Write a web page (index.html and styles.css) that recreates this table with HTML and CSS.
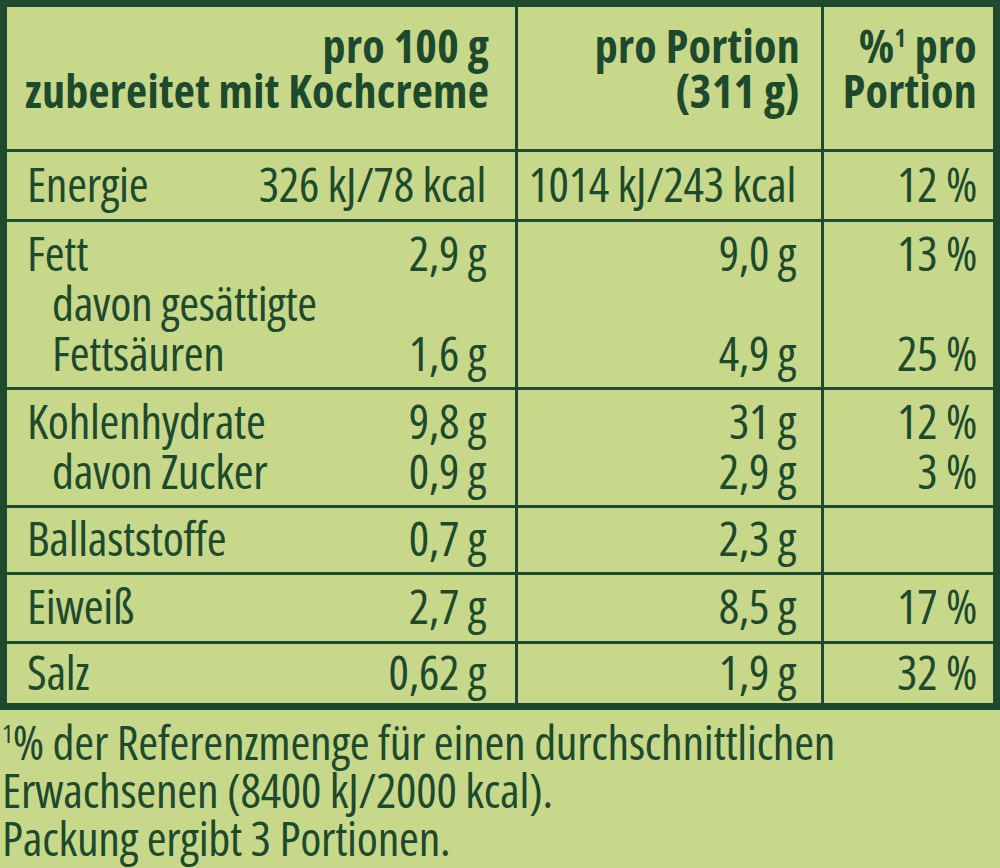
FILE: index.html
```html
<!DOCTYPE html>
<html lang="de">
<head>
<meta charset="utf-8">
<title>Nährwerte</title>
<link rel="stylesheet" href="styles.css">
</head>
<body>
<div class="table">
  <div class="cell head"><div>pro 100 g</div><div>zubereitet mit Kochcreme</div></div>
  <div class="cell head head-2"><div>pro Portion</div><div>(311 g)</div></div>
  <div class="cell head head-3"><div>%<sup>1</sup> pro</div><div>Portion</div></div>

  <div class="cell c1"><div class="line"><span>Energie</span><span>326 kJ/78 kcal</span></div></div>
  <div class="cell c2"><div class="line">1014 kJ/243 kcal</div></div>
  <div class="cell c3"><div class="line">12 %</div></div>

  <div class="cell c1">
    <div class="line"><span>Fett</span><span>2,9 g</span></div>
    <div class="line sub"><span>davon gesättigte</span><span></span></div>
    <div class="line sub"><span>Fettsäuren</span><span>1,6 g</span></div>
  </div>
  <div class="cell c2"><div class="line">9,0 g</div><div class="line"></div><div class="line">4,9 g</div></div>
  <div class="cell c3"><div class="line">13 %</div><div class="line"></div><div class="line">25 %</div></div>

  <div class="cell c1">
    <div class="line"><span>Kohlenhydrate</span><span>9,8 g</span></div>
    <div class="line sub"><span>davon Zucker</span><span>0,9 g</span></div>
  </div>
  <div class="cell c2"><div class="line">31 g</div><div class="line">2,9 g</div></div>
  <div class="cell c3"><div class="line">12 %</div><div class="line">3 %</div></div>

  <div class="cell c1"><div class="line"><span>Ballaststoffe</span><span>0,7 g</span></div></div>
  <div class="cell c2"><div class="line">2,3 g</div></div>
  <div class="cell c3"><div class="line"></div></div>

  <div class="cell c1"><div class="line"><span>Eiweiß</span><span>2,7 g</span></div></div>
  <div class="cell c2"><div class="line">8,5 g</div></div>
  <div class="cell c3"><div class="line">17 %</div></div>

  <div class="cell c1"><div class="line"><span>Salz</span><span>0,62 g</span></div></div>
  <div class="cell c2"><div class="line">1,9 g</div></div>
  <div class="cell c3"><div class="line">32 %</div></div>
</div>
<p class="note"><sup>1</sup>% der Referenzmenge für einen durchschnittlichen<br>Erwachsenen (8400 kJ/2000 kcal).<br>Packung ergibt 3 Portionen.</p>
</body>
</html>
```
FILE: styles.css
```css
html, body {
  margin: 0;
  padding: 0;
  background: #c8d88a;
}
body {
  width: 1000px;
  height: 868px;
  overflow: hidden;
  color: #1d4a2d;
  font-family: "Open Sans", "Liberation Sans", sans-serif;
  font-stretch: 75%;
  font-size: 48px;
  font-weight: 500;
  letter-spacing: -0.3px;
}
.table {
  display: grid;
  grid-template-columns: 508px 303px 169px;
  grid-template-rows: 142px 67px 165px 115px 64px 66px 59px;
  gap: 3px;
  background: #204a30;
  border: 7px solid #204a30;
}
.cell {
  background: #c8d88a;
  display: flex;
  flex-direction: column;
  justify-content: center;
  padding-bottom: 4px;
  line-height: 50px;
}
.head {
  justify-content: flex-start;
  padding: 16px 26px 0 0;
  text-align: right;
  font-weight: 750;
  font-size: 46px;
  line-height: 45px;
  letter-spacing: 0.3px;
}
.head-2 { padding-right: 21px; }
.head-3 { padding-right: 16px; }
.head sup {
  font-size: 24px;
  line-height: 0;
  vertical-align: 0;
  position: relative;
  top: -16px;
}
.c1 { padding-left: 20px; padding-right: 29px; }
.c2 { padding-right: 25px; text-align: right; }
.c3 { padding-right: 16px; text-align: right; }
.line {
  height: 50px;
  white-space: nowrap;
}
.c1 .line {
  display: flex;
  justify-content: space-between;
}
.c1 .sub { padding-left: 25px; }
.note {
  margin: 8px 0 0 2px;
  line-height: 48px;
  letter-spacing: -0.25px;
}
.note sup {
  font-size: 26px;
  line-height: 0;
  vertical-align: 0;
  position: relative;
  top: -17px;
}
```
